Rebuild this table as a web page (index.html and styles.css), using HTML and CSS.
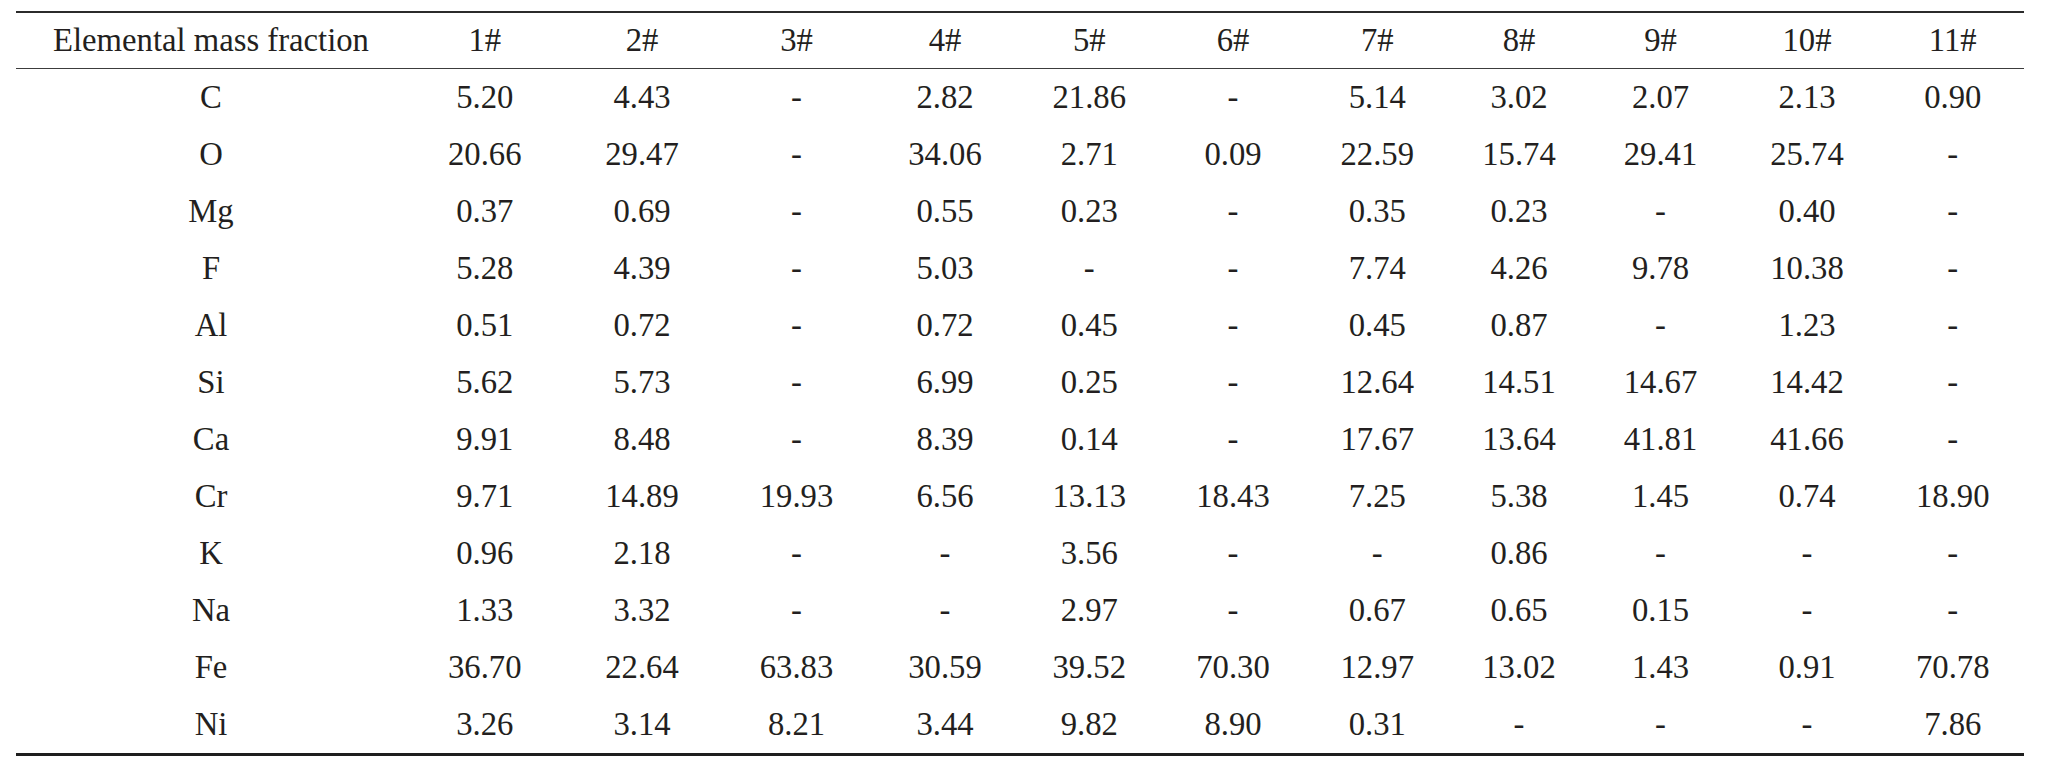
FILE: index.html
```html
<!DOCTYPE html>
<html lang="en">
<head>
<meta charset="utf-8">
<title>Elemental mass fraction</title>
<link rel="stylesheet" href="styles.css">
</head>
<body>
<div class="page">
<table class="data">
<colgroup>
<col class="c0"><col class="c1"><col class="c2"><col class="c3"><col class="c4"><col class="c5"><col class="c6"><col class="c7"><col class="c8"><col class="c9"><col class="c10"><col class="c11">
</colgroup>
<thead>
<tr><th>Elemental mass fraction</th><th>1#</th><th>2#</th><th>3#</th><th>4#</th><th>5#</th><th>6#</th><th>7#</th><th>8#</th><th>9#</th><th>10#</th><th>11#</th></tr>
</thead>
<tbody>
<tr><td>C</td><td>5.20</td><td>4.43</td><td>-</td><td>2.82</td><td>21.86</td><td>-</td><td>5.14</td><td>3.02</td><td>2.07</td><td>2.13</td><td>0.90</td></tr>
<tr><td>O</td><td>20.66</td><td>29.47</td><td>-</td><td>34.06</td><td>2.71</td><td>0.09</td><td>22.59</td><td>15.74</td><td>29.41</td><td>25.74</td><td>-</td></tr>
<tr><td>Mg</td><td>0.37</td><td>0.69</td><td>-</td><td>0.55</td><td>0.23</td><td>-</td><td>0.35</td><td>0.23</td><td>-</td><td>0.40</td><td>-</td></tr>
<tr><td>F</td><td>5.28</td><td>4.39</td><td>-</td><td>5.03</td><td>-</td><td>-</td><td>7.74</td><td>4.26</td><td>9.78</td><td>10.38</td><td>-</td></tr>
<tr><td>Al</td><td>0.51</td><td>0.72</td><td>-</td><td>0.72</td><td>0.45</td><td>-</td><td>0.45</td><td>0.87</td><td>-</td><td>1.23</td><td>-</td></tr>
<tr><td>Si</td><td>5.62</td><td>5.73</td><td>-</td><td>6.99</td><td>0.25</td><td>-</td><td>12.64</td><td>14.51</td><td>14.67</td><td>14.42</td><td>-</td></tr>
<tr><td>Ca</td><td>9.91</td><td>8.48</td><td>-</td><td>8.39</td><td>0.14</td><td>-</td><td>17.67</td><td>13.64</td><td>41.81</td><td>41.66</td><td>-</td></tr>
<tr><td>Cr</td><td>9.71</td><td>14.89</td><td>19.93</td><td>6.56</td><td>13.13</td><td>18.43</td><td>7.25</td><td>5.38</td><td>1.45</td><td>0.74</td><td>18.90</td></tr>
<tr><td>K</td><td>0.96</td><td>2.18</td><td>-</td><td>-</td><td>3.56</td><td>-</td><td>-</td><td>0.86</td><td>-</td><td>-</td><td>-</td></tr>
<tr><td>Na</td><td>1.33</td><td>3.32</td><td>-</td><td>-</td><td>2.97</td><td>-</td><td>0.67</td><td>0.65</td><td>0.15</td><td>-</td><td>-</td></tr>
<tr><td>Fe</td><td>36.70</td><td>22.64</td><td>63.83</td><td>30.59</td><td>39.52</td><td>70.30</td><td>12.97</td><td>13.02</td><td>1.43</td><td>0.91</td><td>70.78</td></tr>
<tr><td>Ni</td><td>3.26</td><td>3.14</td><td>8.21</td><td>3.44</td><td>9.82</td><td>8.90</td><td>0.31</td><td>-</td><td>-</td><td>-</td><td>7.86</td></tr>
</tbody>
</table>
</div>
</body>
</html>
```
FILE: styles.css
```css
html, body {
  margin: 0;
  padding: 0;
  background: #ffffff;
}

.page {
  padding: 11px 0 0 16px;
}

.data {
  width: 2008px;
  table-layout: fixed;
  border-collapse: separate;
  border-spacing: 0;
  font-family: "Liberation Serif", "Times New Roman", serif;
  font-size: 32.7px;
  color: #231f20;
}

.c0 { width: 390px; }
.c1 { width: 157.5px; }
.c2 { width: 157px; }
.c3 { width: 152px; }
.c4 { width: 145px; }
.c5 { width: 143.5px; }
.c6 { width: 144px; }
.c7 { width: 144.5px; }
.c8 { width: 139px; }
.c9 { width: 144px; }
.c10 { width: 149px; }
.c11 { width: 142.5px; }

.data th,
.data td {
  padding: 0;
  text-align: center;
  white-space: nowrap;
  font-weight: normal;
}

.data th {
  line-height: 55px;
  border-top: 2px solid #2b2b2b;
  border-bottom: 1.5px solid #3c3c3c;
}

.data td {
  line-height: 57px;
}

.data tbody tr:last-child td {
  border-bottom: 3px solid #1e1e1e;
}
```
